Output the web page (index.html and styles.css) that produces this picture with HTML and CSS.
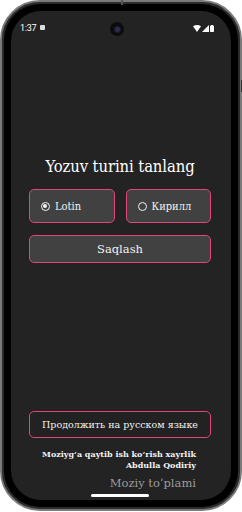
FILE: index.html
```html
<!DOCTYPE html>
<html lang="uz">
<head>
<meta charset="utf-8">
<title>Yozuv turini tanlang</title>
<link rel="stylesheet" href="styles.css">
</head>
<body>
<div class="phone">
  <div class="notch-tick"></div>
  <div class="side-btn"></div>
  <div class="screen">
    <div class="status">
      <div class="status-left">
        <span class="time">1:37</span>
        <span class="sim"></span>
      </div>
      <div class="camera"><div class="lens"></div></div>
      <div class="status-right">
        <svg width="8" height="7" viewBox="0 0 8 7"><path d="M0 1.2 Q4 -1.2 8 1.2 L4 7 Z" fill="#fff"/></svg>
        <svg width="7" height="7" viewBox="0 0 7 7"><path d="M7 0 V7 H0 Z" fill="#fff"/></svg>
        <svg width="4" height="7" viewBox="0 0 4 7"><rect x="0" y="0.6" width="4" height="6.4" rx="0.8" fill="#fff"/><rect x="1" y="0" width="2" height="1" fill="#fff"/></svg>
      </div>
    </div>
    <div class="content">
      <h1 class="title">Yozuv turini tanlang</h1>
      <div class="choices">
        <button class="choice">
          <span class="radio on"></span><span class="label">Lotin</span>
        </button>
        <button class="choice">
          <span class="radio"></span><span class="label">Кирилл</span>
        </button>
      </div>
      <button class="save">Saqlash</button>
    </div>
    <div class="bottom">
      <button class="russian">Продолжить на русском языке</button>
      <p class="quote">Moziyg‘a qaytib ish ko‘rish xayrlik<br>Abdulla Qodiriy</p>
      <p class="brand">Moziy to‘plami</p>
      <div class="home"></div>
    </div>
  </div>
</div>
</body>
</html>
```

FILE: styles.css
```css
* { box-sizing: border-box; }
html, body { margin: 0; padding: 0; background: #ffffff; }
body { width: 242px; height: 512px; overflow: hidden; }

.phone {
  position: relative;
  width: 242px;
  height: 511px;
  border-radius: 40px;
  background: #000;
  border: 2px solid #7a7a7a;
  box-shadow: inset 0 0 0 2px #2c2c2c;
  padding: 9px;
}
.notch-tick {
  position: absolute;
  left: 119px; top: -2px;
  width: 2px; height: 5px;
  background: #555;
}
.side-btn {
  position: absolute;
  right: -2px; top: 78px;
  width: 1px; height: 12px;
  background: #333;
}

.screen {
  height: 100%;
  background: #232323;
  border-radius: 30px;
  display: flex;
  flex-direction: column;
  font-family: "DejaVu Serif", serif;
  color: #f2f2f2;
}

.status {
  height: 34px;
  display: flex;
  align-items: center;
  justify-content: space-between;
  padding: 0 17px 0 9px;
}
.status-left { display: flex; align-items: center; gap: 4px; width: 40px; }
.time {
  font-family: Roboto, "Liberation Sans", sans-serif;
  font-size: 9px;
  color: #fff;
  letter-spacing: -0.3px;
  margin-top: -1px;
}
.sim { width: 5px; height: 5px; background: #ddd; border-radius: 1px; margin-top: -1px; }
.camera {
  width: 14px; height: 14px;
  border-radius: 50%;
  background: #0c0c0c;
  display: flex; align-items: center; justify-content: center;
  margin-top: 2px;
}
.lens { width: 5px; height: 5px; border-radius: 50%; background: #2b2a55; box-shadow: 0 0 0 1px #1a1a2c; }
.status-right { display: flex; align-items: center; gap: 1px; width: 40px; justify-content: flex-end; }

.content { padding: 0 20px 0 18px; }
.title {
  margin: 112px 0 12px;
  font-size: 16.5px;
  line-height: 20px;
  font-weight: normal;
  text-align: center;
  font-stretch: condensed;
  letter-spacing: -0.1px;
  color: #fff;
}
.choices { display: flex; gap: 11px; }
button {
  font-family: "DejaVu Serif", serif;
  color: #f2f2f2;
  cursor: pointer;
}
.choice {
  flex: 1;
  height: 34px;
  background: #414141;
  border: 1.5px solid #e2457c;
  border-radius: 5px;
  display: flex;
  align-items: center;
  gap: 5px;
  padding: 0 0 0 11px;
  font-size: 11px;
  font-stretch: condensed;
}
.radio {
  width: 9px; height: 9px;
  border-radius: 50%;
  border: 1.5px solid #f2f2f2;
  display: inline-block;
  position: relative;
}
.radio.on::after {
  content: "";
  position: absolute;
  left: 1px; top: 1px;
  width: 4px; height: 4px;
  border-radius: 50%;
  background: #f2f2f2;
}
.save {
  display: block;
  width: 100%;
  margin-top: 12px;
  height: 28px;
  background: #414141;
  border: 1.5px solid #e2457c;
  border-radius: 5px;
  font-size: 11.5px;
}

.bottom {
  margin-top: auto;
  padding: 0 20px 0 18px;
  display: flex;
  flex-direction: column;
}
.russian {
  height: 27px;
  background: #222;
  border: 1.5px solid #e2457c;
  border-radius: 5px;
  font-size: 9.5px;
  padding: 0;
}
.quote {
  margin: 11px 15px 0 0;
  text-align: right;
  font-size: 8px;
  line-height: 11px;
  font-weight: bold;
}
.brand {
  margin: 5px 15px 0 0;
  text-align: right;
  font-size: 11.5px;
  line-height: 14px;
  color: #9c9c9c;
}
.home {
  align-self: center;
  width: 58px; height: 3px;
  border-radius: 2px;
  background: #fff;
  margin: 4px 0 3px;
}
```
